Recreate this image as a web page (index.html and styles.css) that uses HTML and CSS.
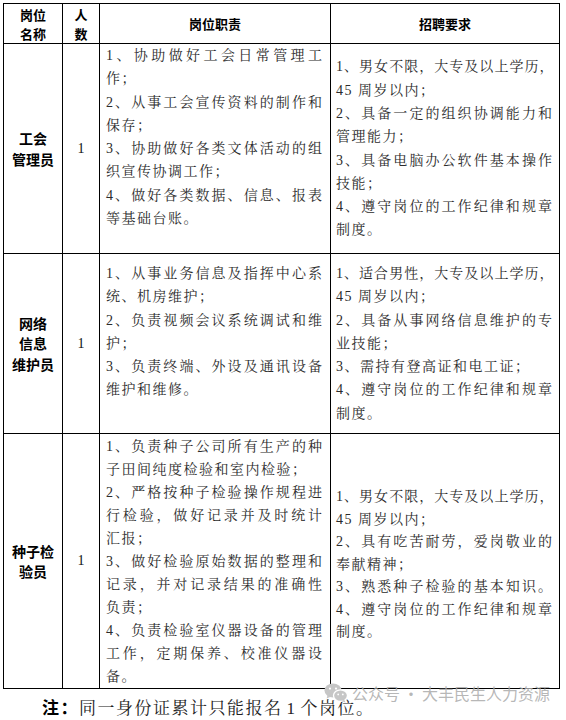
FILE: index.html
```html
<!DOCTYPE html>
<html lang="zh-CN">
<head>
<meta charset="utf-8">
<title>岗位表</title>
<link rel="stylesheet" href="styles.css">
</head>
<body>
<div class="page">
  <div class="sheet">
    <div class="cell head"><span class="hl">岗位</span><span class="hl">名称</span></div>
    <div class="cell head"><span class="hl">人</span><span class="hl">数</span></div>
    <div class="cell head">岗位职责</div>
    <div class="cell head">招聘要求</div>

    <div class="cell name name--wide">工会<br>管理员</div>
    <div class="cell count">1</div>
    <div class="cell text text--top">
      <span class="ln j">1、协助做好工会日常管理工</span>
      <span class="ln">作；</span>
      <span class="ln j">2、从事工会宣传资料的制作和</span>
      <span class="ln">保存；</span>
      <span class="ln j">3、协助做好各类文体活动的组</span>
      <span class="ln">织宣传协调工作；</span>
      <span class="ln j">4、做好各类数据、信息、报表</span>
      <span class="ln">等基础台账。</span>
    </div>
    <div class="cell text req">
      <span class="ln j tight">1、男女不限，大专及以上学历，</span>
      <span class="ln">45 周岁以内；</span>
      <span class="ln j">2、具备一定的组织协调能力和</span>
      <span class="ln">管理能力；</span>
      <span class="ln j">3、具备电脑办公软件基本操作</span>
      <span class="ln">技能；</span>
      <span class="ln j">4、遵守岗位的工作纪律和规章</span>
      <span class="ln">制度。</span>
    </div>

    <div class="cell name">网络<br>信息<br>维护员</div>
    <div class="cell count">1</div>
    <div class="cell text text--top text--pad">
      <span class="ln j">1、从事业务信息及指挥中心系</span>
      <span class="ln">统、机房维护；</span>
      <span class="ln j">2、负责视频会议系统调试和维</span>
      <span class="ln">护；</span>
      <span class="ln j">3、负责终端、外设及通讯设备</span>
      <span class="ln">维护和维修。</span>
    </div>
    <div class="cell text req">
      <span class="ln j tight">1、适合男性，大专及以上学历，</span>
      <span class="ln">45 周岁以内；</span>
      <span class="ln j">2、具备从事网络信息维护的专</span>
      <span class="ln">业技能；</span>
      <span class="ln">3、需持有登高证和电工证；</span>
      <span class="ln j">4、遵守岗位的工作纪律和规章</span>
      <span class="ln">制度。</span>
    </div>

    <div class="cell name">种子检<br>验员</div>
    <div class="cell count">1</div>
    <div class="cell text text--dense">
      <span class="ln j">1、负责种子公司所有生产的种</span>
      <span class="ln">子田间纯度检验和室内检验；</span>
      <span class="ln j">2、严格按种子检验操作规程进</span>
      <span class="ln j">行检验，做好记录并及时统计</span>
      <span class="ln">汇报；</span>
      <span class="ln j">3、做好检验原始数据的整理和</span>
      <span class="ln j">记录，并对记录结果的准确性</span>
      <span class="ln">负责；</span>
      <span class="ln j">4、负责检验室仪器设备的管理</span>
      <span class="ln j">工作，定期保养、校准仪器设</span>
      <span class="ln">备。</span>
    </div>
    <div class="cell text req req--low">
      <span class="ln j tight">1、男女不限，大专及以上学历，</span>
      <span class="ln">45 周岁以内；</span>
      <span class="ln j">2、具有吃苦耐劳，爱岗敬业的</span>
      <span class="ln">奉献精神；</span>
      <span class="ln j">3、熟悉种子检验的基本知识。</span>
      <span class="ln j">4、遵守岗位的工作纪律和规章</span>
      <span class="ln">制度。</span>
    </div>
  </div>

  <p class="note"><b class="note-label">注：</b>同一身份证累计只能报名<span class="note-num">1</span>个岗位。</p>

  <div class="watermark">
    <svg class="wm-icon" width="24" height="20" viewBox="0 0 24 20" aria-hidden="true">
      <ellipse cx="9" cy="7.5" rx="8.5" ry="7" fill="#c6c6c6"/>
      <path d="M3.6 12 L2.6 15.6 L7.2 13.4 Z" fill="#c6c6c6"/>
      <circle cx="6" cy="5.6" r="1.1" fill="#fff"/>
      <circle cx="12" cy="5.6" r="1.1" fill="#fff"/>
      <ellipse cx="16.5" cy="12.6" rx="7" ry="5.8" fill="#c6c6c6" stroke="#fff" stroke-width="1.3"/>
      <path d="M20.2 16.8 L21.6 19.6 L17.6 18.2 Z" fill="#c6c6c6"/>
      <circle cx="14.2" cy="11.4" r="0.9" fill="#fff"/>
      <circle cx="18.8" cy="11.4" r="0.9" fill="#fff"/>
    </svg>
    <span class="wm-text">公众号<span class="wm-dot">·</span>大丰民生人力资源</span>
  </div>
</div>
</body>
</html>
```

FILE: styles.css
```css
* { box-sizing: border-box; }

html, body {
  margin: 0;
  padding: 0;
  background: #fff;
}

body {
  width: 566px;
  height: 720px;
  overflow: hidden;
  font-family: "Liberation Serif", "Noto Serif CJK SC", "Noto Sans CJK SC", serif;
  color: #2b2b2b;
}

.page {
  position: relative;
  padding: 3px 0 0 3px;
  height: 720px;
}

.sheet {
  display: grid;
  grid-template-columns: 58px 36px 230px 228px;
  grid-template-rows: 39px 209px 179px 254px;
  gap: 1px;
  width: max-content;
  background: #000;
  border: 1px solid #000;
}

.cell {
  background: #fff;
  display: flex;
  flex-direction: column;
  justify-content: center;
}

.head {
  align-items: center;
  text-align: center;
  font-family: "Noto Sans CJK SC", sans-serif;
  font-weight: 700;
  font-size: 13px;
  line-height: 19px;
  color: #000;
}

.hl { display: block; }

.name {
  align-items: center;
  text-align: center;
  font-family: "Noto Sans CJK SC", sans-serif;
  font-weight: 700;
  font-size: 14px;
  line-height: 20.5px;
  color: #000;
}

.name--wide { line-height: 21px; }

.count {
  align-items: center;
  font-family: "Liberation Serif", serif;
  font-size: 14px;
  color: #111;
}

.text {
  font-size: 14px;
  line-height: 23.3px;
  letter-spacing: 1.5px;
  padding: 0 6.5px 0 6px;
}

.text--top { justify-content: flex-start; }
.text--pad { padding-top: 8px; }
.text--dense { line-height: 23px; }

.req { padding: 0 5.5px 0 5px; }
.req--low { padding-top: 8px; line-height: 22.5px; }

.ln { display: block; }

.j {
  text-align: justify;
  text-align-last: justify;
}

.tight { letter-spacing: 0; }

.note {
  margin: 6px 0 0 39px;
  font-size: 17px;
  line-height: 24px;
  letter-spacing: 1.5px;
  color: #222;
}

.note-label {
  font-family: "Noto Sans CJK SC", sans-serif;
  font-weight: 700;
  color: #000;
}

.note-num { margin: 0 4px; }

.watermark {
  position: absolute;
  left: 324px;
  top: 683px;
  display: flex;
  align-items: center;
  gap: 4px;
}

.wm-icon { display: block; }

.wm-text {
  font-family: "Noto Sans CJK SC", sans-serif;
  font-size: 16px;
  line-height: 20px;
  color: rgba(170, 170, 170, 0.85);
  white-space: nowrap;
}

.wm-dot { margin: 0 3px; }
```
